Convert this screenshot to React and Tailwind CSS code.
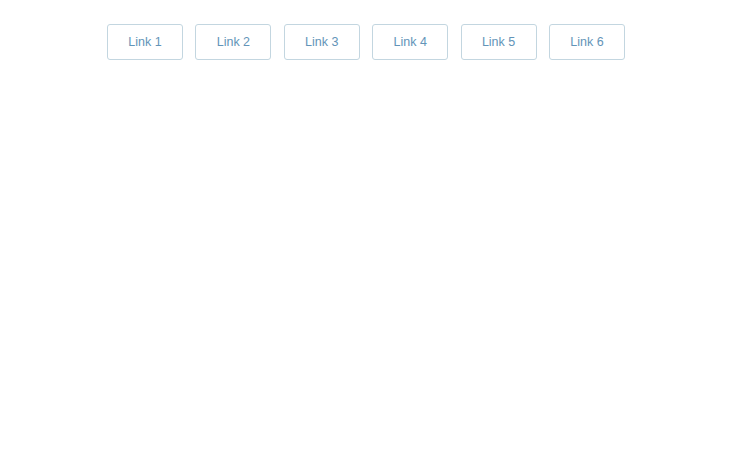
export default function App() {
  const links = ["Link 1", "Link 2", "Link 3", "Link 4", "Link 5", "Link 6"];
  return (
    <div className="w-[730px] h-[456px] bg-white" style={{ fontFamily: "'Liberation Sans', Arial, sans-serif" }}>
      <nav className="flex justify-center gap-[12.4px] pt-[24px] pl-[2px]">
        {links.map((l) => (
          <a
            key={l}
            href="#"
            className="flex items-center justify-center w-[76px] h-[36px] border border-[#c3d6e0] rounded-[3px] text-[12.5px] text-[#6394b8]"
          >
            {l}
          </a>
        ))}
      </nav>
    </div>
  );
}
